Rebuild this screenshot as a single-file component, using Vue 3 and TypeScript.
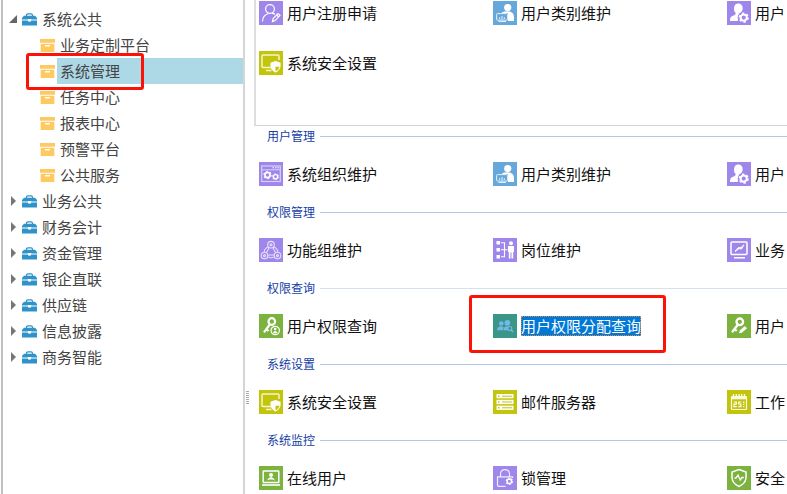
<script setup lang="ts">
import { ref } from 'vue'

interface TreeNode {
  label: string
  children?: string[]
}

interface MenuItem {
  label: string
  icon: string
  color: string
  marked?: boolean
}

interface MenuGroup {
  title: string
  faint?: boolean
  items: MenuItem[]
}

const purple = '#9f86eb'
const blue = '#66a8dc'
const olive = '#c3c40c'
const green = '#7cb23e'
const teal = '#3a9688'

const tree: TreeNode[] = [
  {
    label: '系统公共',
    children: ['业务定制平台', '系统管理', '任务中心', '报表中心', '预警平台', '公共服务'],
  },
  { label: '业务公共' },
  { label: '财务会计' },
  { label: '资金管理' },
  { label: '银企直联' },
  { label: '供应链' },
  { label: '信息披露' },
  { label: '商务智能' },
]

const selected = ref('系统管理')

const frequent: MenuItem[] = [
  { label: '用户注册申请', icon: 'user-edit', color: purple },
  { label: '用户类别维护', icon: 'user-screen', color: blue },
  { label: '用户', icon: 'user-gear', color: purple },
  { label: '系统安全设置', icon: 'screen-shield', color: olive },
]

const groups: MenuGroup[] = [
  {
    title: '用户管理',
    items: [
      { label: '系统组织维护', icon: 'window-gears', color: purple },
      { label: '用户类别维护', icon: 'user-screen', color: blue },
      { label: '用户', icon: 'user-gear', color: purple },
    ],
  },
  {
    title: '权限管理',
    items: [
      { label: '功能组维护', icon: 'nodes', color: purple },
      { label: '岗位维护', icon: 'post', color: purple },
      { label: '业务', icon: 'screen-tool', color: purple },
    ],
  },
  {
    title: '权限查询',
    faint: true,
    items: [
      { label: '用户权限查询', icon: 'key-user', color: green },
      { label: '用户权限分配查询', icon: 'users-search', color: teal, marked: true },
      { label: '用户', icon: 'key-pen', color: green },
    ],
  },
  {
    title: '系统设置',
    items: [
      { label: '系统安全设置', icon: 'screen-shield', color: olive },
      { label: '邮件服务器', icon: 'server', color: olive },
      { label: '工作', icon: 'calendar', color: olive },
    ],
  },
  {
    title: '系统监控',
    items: [
      { label: '在线用户', icon: 'laptop-user', color: green },
      { label: '锁管理', icon: 'lock-gear', color: purple },
      { label: '安全', icon: 'shield-pulse', color: green },
    ],
  },
]
</script>

<template>
  <div class="page">
    <svg class="sprite" aria-hidden="true">
      <symbol id="briefcase" viewBox="0 0 15 13">
        <path d="M4.5 3.2V2.4Q4.5.8 6 .8H9Q10.500.8 10.500 2.400V3.200" fill="none" stroke="#2f93ca" stroke-width="1.200" />
        <path d="M2 2.800H13L15 5V6.600H9.200V6H5.800V6.600H0V5ZM0 7.400H5.800Q6 8.800 7.500 8.800T9.200 7.400H15V12.500H0Z" fill="#2f93ca" />
      </symbol>
      <symbol id="box" viewBox="0 0 15 13">
        <path d="M0 0H15V3.700H0ZM.7 4.700H14.300V13H.7ZM5 6V7.400H10V6Z" fill="#ffc961" fill-rule="evenodd" />
      </symbol>
      <symbol id="open" viewBox="0 0 8 8"><path d="M8 0V8H0Z" fill="#666" /></symbol>
      <symbol id="closed" viewBox="0 0 8 10"><path d="M2 0L7 5L2 10Z" fill="#777" /></symbol>

      <symbol id="gear" viewBox="-6 -6 12 12">
        <circle r="3.400" fill="none" stroke="currentColor" stroke-width="2.200" />
        <circle r="4.800" fill="none" stroke="currentColor" stroke-width="1.600" stroke-dasharray="2.500 2.526" />
      </symbol>

      <symbol id="user-edit" viewBox="0 0 24 24">
        <g fill="none" stroke="#fff" stroke-width="1.200">
          <circle cx="11" cy="8" r="4.400" />
          <path d="M3.500 20.500C3.600 15.500 6 13.500 9.500 12.500M13 12.200Q15 12.600 16 13.500" />
          <path d="M13.500 20.500L14.200 17.600L19 12.500L21 14.400L16.200 19.600ZM17.700 14L19.500 15.800" />
        </g>
      </symbol>
      <symbol id="user-screen" viewBox="0 0 24 24">
        <circle cx="14.700" cy="6.500" r="3.600" fill="#fff" />
        <path d="M9 11.500Q11.500 10 15 10.300Q21 10.800 21 16V20H15V12H9Z" fill="#fff" />
        <rect x="3.600" y="12.600" width="11" height="6.500" rx=".8" fill="#66a8dc" stroke="#e3f0fa" />
        <path d="M5.500 20.500H13M9 15V18.500M6.700 16.200V18M11.300 16.200V18" stroke="#e3f0fa" />
      </symbol>
      <symbol id="user-gear" viewBox="0 0 24 24">
        <path d="M11.300 2.500C14.500 2.500 16 5 15.600 8C15.300 10.300 14 11 14 12.500L10.500 20H3C3 17 3.500 15.500 6 14.700C8 14 9 13.500 8.600 11.800C7.300 10.700 7 9 7 7.400C7 4.500 8.700 2.500 11.300 2.500Z" fill="#fff" />
        <circle cx="16.700" cy="16.600" r="6" fill="#9f86eb" />
        <use href="#gear" x="11.200" y="11.100" width="11" height="11" color="#fff" />
      </symbol>
      <symbol id="screen-shield" viewBox="0 0 24 24">
        <path d="M12.500 16.500H4Q3 16.500 3 15.500V5Q3 4 4 4H19Q20 4 20 5V9M7 19.500H12.500" fill="none" stroke="#f5f5cf" stroke-width="1.500" />
        <path d="M16.500 10.500L21 12.200V15.500Q20.500 19 16.500 21Q12.600 19 12 15.500V12.200Z" fill="#c3c40c" stroke="#fff" stroke-width="1.100" />
        <path d="M16.500 10.500V21Q12.600 19 12 15.500V12.200ZM16.500 10.500L21 12.200V15.800H16.500Z" fill="#fff" />
      </symbol>
      <symbol id="window-gears" viewBox="0 0 24 24">
        <rect x="2.700" y="4" width="18.600" height="15.500" fill="none" stroke="#d8cff8" stroke-width="1.200" />
        <path d="M3 7.800H21" stroke="#d8cff8" />
        <path d="M13.500 5.800H20" stroke="#fff" stroke-dasharray="1.500 1" />
        <use href="#gear" x="4" y="8.500" width="9" height="9" color="#fff" />
        <use href="#gear" x="12.800" y="11" width="7.500" height="7.500" color="#fff" />
      </symbol>
      <symbol id="nodes" viewBox="0 0 24 24">
        <g fill="none" stroke="#e6dffc" stroke-width="1.100">
          <circle cx="12" cy="6.700" r="3.300" />
          <circle cx="5.500" cy="17.600" r="3.300" />
          <circle cx="18.500" cy="17.600" r="3.300" />
          <circle cx="12" cy="6.700" r="1" />
          <circle cx="5.500" cy="17.600" r="1" />
          <circle cx="18.500" cy="17.600" r="1" />
          <path d="M9 9Q5.500 10.500 5.200 14M15 9Q18.500 10.500 18.800 14M9.300 19Q12 20.500 14.700 19M10 10L7.500 14.500M14 10L16.500 14.500M9 17H15" />
        </g>
      </symbol>
      <symbol id="post" viewBox="0 0 24 24">
        <path d="M3.500 3H7V6.500H3.500ZM3.500 10H7V13.500H3.500ZM3.500 17H7V20.500H3.500Z" fill="#fff" />
        <path d="M8 4.800H11.500V18.800H8M8 11.800H14.500" fill="none" stroke="#fff" stroke-width="1.100" />
        <circle cx="18" cy="5.300" r="2" fill="#fff" />
        <path d="M15 8H21V14H20.200V20.500H18.500V14.500H17.500V20.500H15.800V14H15Z" fill="#fff" />
      </symbol>
      <symbol id="screen-tool" viewBox="0 0 24 24">
        <rect x="4" y="4" width="16" height="12.500" rx="1" fill="none" stroke="#fff" stroke-width="1.500" />
        <path d="M7 19.800H18" stroke="#fff" stroke-width="1.500" />
        <path d="M8 13L11.300 9.600H14L17 6.700L14.800 10.800H11.800L8 13.800" fill="#fff" stroke="#fff" stroke-width=".8" />
      </symbol>
      <symbol id="key-user" viewBox="0 0 24 24">
        <circle cx="12.800" cy="7.500" r="3.300" fill="none" stroke="#fff" stroke-width="2.200" />
        <path d="M10.800 10.500L5 18.300M7.300 15L9.500 17" stroke="#fff" stroke-width="2.200" />
        <circle cx="16.200" cy="16.500" r="4.200" fill="#7cb23e" stroke="#fff" stroke-width="1.200" />
        <circle cx="16.200" cy="15" r="1.300" fill="#fff" />
        <path d="M13.800 18.500Q16.200 15.500 18.600 18.500L16.200 19.500Z" fill="#fff" />
      </symbol>
      <symbol id="users-search" viewBox="0 0 24 24">
        <g fill="#70b8e5">
          <circle cx="8.300" cy="9.500" r="2.300" />
          <circle cx="14.400" cy="8.800" r="2.900" />
          <path d="M4 16.300Q4 12.600 8.300 12.300L10.700 13.200L9.500 16.300Z" />
          <path d="M10.300 16.300Q10.500 12.200 14.400 12.200L17 13Q14 14 15 16.300Z" />
        </g>
        <circle cx="16.800" cy="14.500" r="2" fill="#3a9688" stroke="#70b8e5" stroke-width="1.200" />
        <path d="M18.200 16L20 18" stroke="#70b8e5" stroke-width="1.500" />
      </symbol>
      <symbol id="key-pen" viewBox="0 0 24 24">
        <circle cx="12.800" cy="7.800" r="3.300" fill="none" stroke="#fff" stroke-width="2.300" />
        <path d="M10.800 10.800L5 18.300M7.500 15L9.800 17" stroke="#fff" stroke-width="2.300" />
        <path d="M12 19.300L12.800 16.500L17.800 12L20 14.200L14.800 18.800Z" fill="#fff" />
      </symbol>
      <symbol id="server" viewBox="0 0 24 24">
        <g fill="#fff">
          <rect x="3.500" y="4" width="17" height="4.300" />
          <rect x="3.500" y="9.800" width="17" height="4.300" />
          <rect x="3.500" y="15.600" width="17" height="4.300" />
        </g>
        <path d="M9 6.200H19M9 12H19M9 17.800H19" stroke="#c3c40c" />
        <path d="M5 6.200H6.500M5 12H6.500M5 17.800H6.500" stroke="#c3c40c" stroke-width="1.500" />
      </symbol>
      <symbol id="calendar" viewBox="0 0 24 24">
        <rect x="4.500" y="6.500" width="15" height="13" rx="1" fill="none" stroke="#fafadd" stroke-width="1.200" />
        <path d="M4.500 6H19.500V9.300H4.500Z" fill="#fafadd" />
        <path d="M6.500 4V7M9.300 4V7M12 4V7M14.700 4V7M17.500 4V7" stroke="#fff" stroke-width="1.300" />
        <path d="M6.700 12H9.300V14.200H7V16.700H9.700M14.200 12H11.700V14H13.900V16.700H11.300" fill="none" stroke="#fff" stroke-width="1.200" />
        <path d="M16.700 11.500V17.500" stroke="#fff" stroke-width="1.500" stroke-dasharray="1.400 .8" />
      </symbol>
      <symbol id="laptop-user" viewBox="0 0 24 24">
        <rect x="4.200" y="5" width="15.600" height="11.500" rx=".5" fill="none" stroke="#fff" stroke-width="1.500" />
        <path d="M3 19H21" stroke="#fff" stroke-width="1.600" />
        <circle cx="12" cy="9" r="2" fill="#fff" />
        <path d="M8 14.500Q9 11.500 12 11Q15 11.500 16 14.500L13.500 13.500H10.500Z" fill="#fff" />
      </symbol>
      <symbol id="lock-gear" viewBox="0 0 24 24">
        <path d="M12.500 20.300H5.500Q4.500 20.300 4.500 19.300V10.800H19.500V12M7.500 10.500V8Q7.700 3.700 12 3.700T16.500 8V10.500" fill="none" stroke="#f0ebff" stroke-width="1.200" />
        <use href="#gear" x="12.300" y="11.300" width="8" height="8" color="#fff" />
      </symbol>
      <symbol id="shield-pulse" viewBox="0 0 24 24">
        <path d="M12 3.500L19 6V12Q18.500 17.500 12 20.500Q5.500 17.500 5 12V6Z" fill="none" stroke="#fff" stroke-width="1.500" />
        <path d="M7.500 12H9L11 9L13.200 14L15 11.500H16.800" fill="none" stroke="#fff" stroke-width="1.300" />
      </symbol>
    </svg>

    <nav class="sidebar">
      <ul>
        <li v-for="(node, i) in tree" :key="node.label">
          <button type="button" class="row root">
            <svg class="arrow"><use :href="i === 0 ? '#open' : '#closed'" /></svg>
            <svg class="tree-icon"><use href="#briefcase" /></svg>
            <span>{{ node.label }}</span>
          </button>
          <ul v-if="node.children">
            <li v-for="child in node.children" :key="child">
              <button
                type="button"
                class="row child"
                :class="{ selected: child === selected }"
                @click="selected = child"
              >
                <svg class="tree-icon"><use href="#box" /></svg>
                <span class="child-label">{{ child }}</span>
              </button>
            </li>
          </ul>
        </li>
      </ul>
    </nav>

    <div class="splitter"><span class="grip"></span></div>

    <main class="content">
      <div class="frequent grid">
        <a v-for="item in frequent" :key="item.label" href="#" class="item">
          <svg class="tile" :style="{ background: item.color }"><use :href="'#' + item.icon" /></svg>
          <span class="label">{{ item.label }}</span>
        </a>
      </div>
      <section v-for="group in groups" :key="group.title" class="group">
        <h2 :class="{ faint: group.faint }">{{ group.title }}</h2>
        <div class="grid">
          <a
            v-for="item in group.items"
            :key="item.label"
            href="#"
            class="item"
            :class="{ marked: item.marked }"
          >
            <svg class="tile" :style="{ background: item.color }"><use :href="'#' + item.icon" /></svg>
            <span class="label">{{ item.label }}</span>
          </a>
        </div>
      </section>
    </main>
  </div>
</template>

<style>
body {
  margin: 0;
  background: #fff;
}
</style>

<style scoped>
.page {
  display: flex;
  height: 100vh;
  overflow: hidden;
  font-family: 'Noto Sans CJK SC', sans-serif;
  font-size: 15px;
  color: #111;
}

.sprite {
  position: absolute;
  width: 0;
  height: 0;
}

.sidebar {
  flex: 0 0 240px;
  margin-left: 1px;
  padding-top: 6px;
  border-left: 2px solid #bfc0c3;
  border-right: 2px solid #d5d5d5;
}

ul {
  margin: 0;
  padding: 0;
  list-style: none;
}

.row {
  position: relative;
  display: flex;
  align-items: center;
  width: 100%;
  height: 26px;
  padding: 0;
  border: 0;
  background: none;
  font: inherit;
  line-height: 26px;
  color: #444;
  text-align: left;
}

.root {
  gap: 5px;
  padding-left: 6px;
}

.child {
  gap: 2px;
  padding-left: 37px;
}

.arrow {
  width: 8px;
  height: 10px;
}

.tree-icon {
  flex: none;
  width: 15px;
  height: 13px;
}

.child-label {
  flex: 1;
  padding-left: 3px;
}

.selected .child-label {
  background: #add8e6;
}

.selected::after,
.marked::after {
  content: '';
  position: absolute;
  border: 3px solid #fd1207;
  border-radius: 3px;
  pointer-events: none;
}

.selected::after {
  top: -5px;
  bottom: -6px;
  left: 23px;
  width: 112px;
}

.splitter {
  flex: 0 0 9px;
}

.grip {
  display: block;
  width: 3px;
  height: 14px;
  margin: 391px 0 0 1px;
  background: repeating-linear-gradient(#aaa 0 1px, #fff 1px 2px);
}

.content {
  flex: 1;
  min-width: 0;
  overflow: hidden;
}

.grid {
  display: grid;
  grid-template-columns: repeat(3, 234px);
  gap: 26px 0;
  padding-left: 5px;
}

.frequent {
  padding: 1px 0 50px 3px;
  border-left: 2px solid #dedede;
  border-bottom: 1px solid #d5d5d5;
}

.group {
  padding-bottom: 16px;
}

h2 {
  display: flex;
  align-items: center;
  gap: 5px;
  margin: 0 0 16px;
  padding-left: 13px;
  font-size: 12px;
  font-weight: 400;
  line-height: 20px;
  color: #15428b;
  color: #1540a5;
}

h2::after {
  content: '';
  flex: 1;
  height: 1px;
  background: #b6c6e6;
}

h2.faint::after {
  background: #d6e1ef;
}

.item {
  position: relative;
  display: flex;
  align-items: center;
  justify-self: start;
  gap: 4px;
  height: 24px;
  color: inherit;
  text-decoration: none;
  white-space: nowrap;
}

.tile {
  flex: none;
  width: 24px;
  height: 24px;
}

.label {
  line-height: 20px;
}

.marked .label {
  background: #0078d7;
  color: #fff;
  outline: 1px dotted #d88a45;
  outline-offset: -1px;
}

.marked::after {
  top: -19px;
  right: -25px;
  bottom: -15px;
  left: -24px;
}
</style>
